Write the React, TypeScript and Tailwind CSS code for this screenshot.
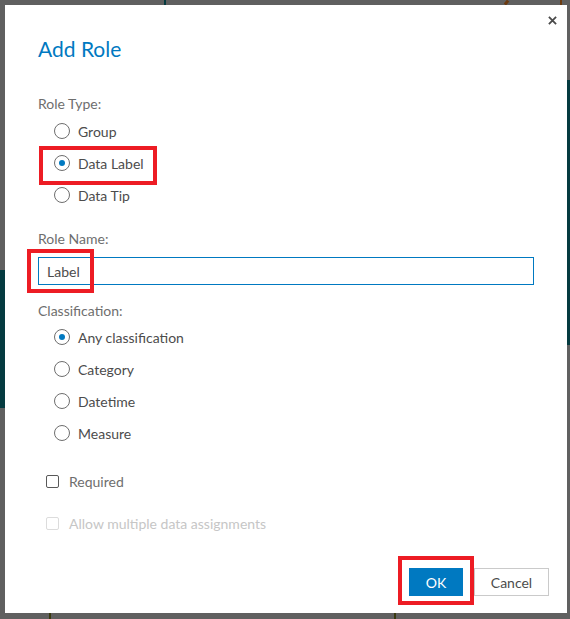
import React from 'react'

const font = { fontFamily: 'Lato, "Open Sans", Arial, sans-serif' }

// -------------------------------------------------------
// Small form pieces
// -------------------------------------------------------

function Radio({ label, checked }: { label: string; checked?: boolean }) {
    return (
        <div className="flex items-center h-8 pl-4 gap-2">
            <span className="w-4 h-4 rounded-full border border-[#6e6e6e] flex items-center justify-center shrink-0">
                {checked && <span className="w-[6px] h-[6px] rounded-full bg-[#0079c1]" />}
            </span>
            <span className="text-[14px] text-[#4c4c4c]">{label}</span>
        </div>
    )
}

function Highlight({ className }: { className: string }) {
    return <span className={`absolute border-[4px] border-[#ed1c24] pointer-events-none ${className}`} />
}

function Checkbox({ label, disabled }: { label: string; disabled?: boolean }) {
    return (
        <div className="flex items-center h-8 pl-[8px] gap-[10px]">
            <span
                className={[
                    'w-[13px] h-[13px] rounded-[2px] border shrink-0',
                    disabled ? 'border-[#dcdcdc]' : 'border-[#595959]',
                ].join(' ')}
            />
            <span className={`text-[14px] ${disabled ? 'text-[#c6c6c6]' : 'text-[#6e6e6e]'}`}>{label}</span>
        </div>
    )
}

// -------------------------------------------------------
// Main component
// -------------------------------------------------------

export default function App() {
    return (
        <div className="relative w-[570px] h-[619px] bg-[#606060] overflow-hidden" style={font}>
            {/* background canvas scraps peeking out behind the dialog */}
            <span className="absolute left-0 top-[270px] w-[5px] h-[138px] bg-[#053b40]" />
            <span className="absolute right-0 top-[80px] w-[3px] h-[265px] bg-[#053b40]" />
            <span className="absolute left-[164px] top-0 w-[2px] h-[5px] bg-[#053b40]" />
            <span className="absolute left-[505px] top-0 w-[3px] h-[5px] bg-[#6b3a10] rotate-[40deg]" />
            <span className="absolute left-[560px] top-0 w-[2px] h-[5px] bg-[#6b3a10]" />
            <span className="absolute left-[49px] bottom-0 w-[2px] h-[6px] bg-[#3a3a10]" />
            <span className="absolute left-[394px] bottom-0 w-[2px] h-[6px] bg-[#3a3a10]" />

            <div className="pl-[5px] pt-[5px]">
                <div className="relative w-[562px] h-[608px] bg-white flex flex-col px-[33px] pt-[30px]">
                    {/* close */}
                    <button className="absolute right-[5px] top-[5px] w-5 h-5 flex items-center justify-center">
                        <svg width="9" height="9" viewBox="0 0 10 10">
                            <path d="M1 1 L9 9 M9 1 L1 9" stroke="#4a4a4a" strokeWidth="2" />
                        </svg>
                    </button>

                    <h1 className="text-[21px] leading-[28px] text-[#0079c1]">Add Role</h1>

                    <div className="mt-[31px] text-[14px] leading-5 text-[#6e6e6e]">Role Type:</div>
                    <div className="flex flex-col mt-px">
                        <Radio label="Group" />
                        <div className="relative">
                            <Radio label="Data Label" checked />
                            <Highlight className="left-[1px] -top-[1px] w-[118px] h-[39px]" />
                        </div>
                        <Radio label="Data Tip" />
                    </div>

                    <div className="mt-[18px] text-[14px] leading-5 text-[#6e6e6e]">Role Name:</div>
                    <div className="relative mt-2">
                        <input
                            defaultValue="Label"
                            className="w-full h-[28px] border border-[#0079c1] px-2 text-[14px] text-[#4c4c4c] outline-none"
                            style={font}
                        />
                        <Highlight className="-left-[11px] -top-[8px] w-[67px] h-[44px]" />
                    </div>

                    <div className="mt-4 text-[14px] leading-5 text-[#6e6e6e]">Classification:</div>
                    <div className="flex flex-col">
                        <Radio label="Any classification" checked />
                        <Radio label="Category" />
                        <Radio label="Datetime" />
                        <Radio label="Measure" />
                    </div>

                    <div className="mt-4">
                        <Checkbox label="Required" />
                    </div>
                    <div className="mt-[10px]">
                        <Checkbox label="Allow multiple data assignments" disabled />
                    </div>

                    <div className="flex justify-end gap-[11px] mt-[29px] -mr-[15px]">
                        <div className="relative">
                            <button className="w-[54px] h-[28px] bg-[#0079c1] text-white text-[14px]">OK</button>
                            <Highlight className="-left-[11px] -top-[12px] w-[76px] h-[49px]" />
                        </div>
                        <button className="w-[75px] h-[28px] border border-[#cacaca] bg-white text-[#4c4c4c] text-[14px]">
                            Cancel
                        </button>
                    </div>
                </div>
            </div>
        </div>
    )
}
